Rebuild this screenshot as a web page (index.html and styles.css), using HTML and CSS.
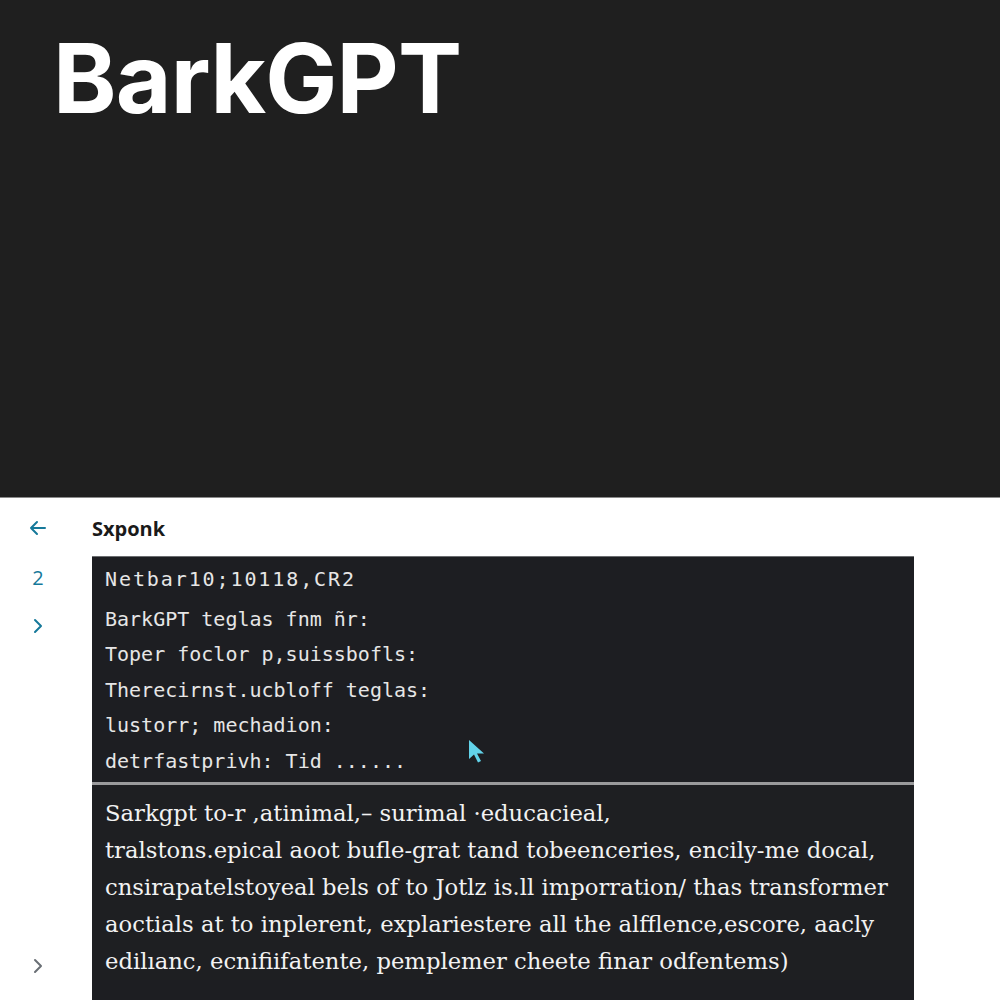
FILE: index.html
```html
<!DOCTYPE html>
<html>
<head>
<meta charset="utf-8">
<link rel="stylesheet" href="styles.css">
</head>
<body>
<header class="hero">
  <h1 class="brand">BarkGPT</h1>
</header>
<main class="main">
  <nav class="sidebar">
    <div class="side-item teal">
      <svg width="18" height="16" viewBox="0 0 18 16"><path d="M16 8H2M8 2L2 8l6 6" fill="none" stroke="currentColor" stroke-width="2" stroke-linecap="round" stroke-linejoin="round"/></svg>
    </div>
    <div class="side-item teal num">2</div>
    <div class="side-item teal">
      <svg width="12" height="18" viewBox="0 0 12 18"><path d="M3 3l6 6-6 6" fill="none" stroke="currentColor" stroke-width="2" stroke-linecap="round" stroke-linejoin="round"/></svg>
    </div>
    <div class="side-item gray bottom">
      <svg width="12" height="18" viewBox="0 0 12 18"><path d="M3 3l6 6-6 6" fill="none" stroke="currentColor" stroke-width="2" stroke-linecap="round" stroke-linejoin="round"/></svg>
    </div>
  </nav>
  <section class="content">
    <div class="content-title">Sxponk</div>
    <div class="panel">
      <div class="code">
        <div class="code-line first">Netbar10;10118,CR2</div>
        <div class="code-line">BarkGPT teglas fnm ñr:</div>
        <div class="code-line">Toper foclor p,suissbofls:</div>
        <div class="code-line">Therecirnst.ucbloff teglas:</div>
        <div class="code-line">lustorr; mechadion:</div>
        <div class="code-line">detrfastprivh: Tid ......</div>
        <svg class="cursor" width="20" height="26" viewBox="0 0 20 26"><path d="M2 1v19l5-4.5 4 8 3-1.5-4-7.5h7z" fill="#62d3ea"/></svg>
      </div>
      <div class="prose">
        <p class="prose-line">Sarkgpt to-r ,atinimal,– surimal ·educacieal,</p>
        <p class="prose-line">tralstons.epical aoot bufle-grat tand tobeenceries, encily-me docal,</p>
        <p class="prose-line">cnsirapatelstoyeal bels of to Jotlz is.ll imporration/ thas transformer</p>
        <p class="prose-line">aoctials at to inplerent, explariestere all the alfflence,escore, aacly</p>
        <p class="prose-line">edilıanc, ecnifiifatente, pemplemer cheete finar odfentems)</p>
      </div>
    </div>
  </section>
</main>
</body>
</html>
```

FILE: styles.css
```css
* { box-sizing: border-box; }
html, body { margin: 0; padding: 0; }
body {
  width: 1000px;
  height: 1000px;
  overflow: hidden;
  background: #ffffff;
  font-family: "Open Sans", "Noto Sans", sans-serif;
}
.hero {
  height: 498px;
  background: #1f1f1f;
  border-bottom: 1px solid #8a8a8a;
  padding: 30px 0 0 53px;
}
.brand {
  margin: 0;
  font-family: Inter, "Open Sans", sans-serif;
  font-weight: 700;
  font-size: 96px;
  line-height: 1;
  color: #ffffff;
  letter-spacing: -0.8px;
}
.main {
  display: flex;
  height: 502px;
  overflow: hidden;
}
.sidebar {
  width: 92px;
  flex: none;
  display: flex;
  flex-direction: column;
  padding: 18px 0 22px 0;
}
.side-item {
  width: 76px;
  height: 24px;
  display: flex;
  align-items: center;
  justify-content: center;
  margin-bottom: 25px;
}
.side-item.num {
  font-family: "Open Sans", sans-serif;
  font-size: 20px;
  font-weight: 500;
}
.side-item.bottom { margin-top: auto; margin-bottom: 0; }
.teal { color: #16799a; }
.gray { color: #6a6f75; }
.content {
  flex: 1;
  display: flex;
  flex-direction: column;
  padding-right: 86px;
}
.content-title {
  height: 58px;
  display: flex;
  align-items: center;
  font-weight: 700;
  font-size: 20px;
  color: #1a1a1a;
  padding-top: 2px;
}
.panel {
  flex: 1;
  background: #1d1e22;
  border-top: 1px solid #6b6d70;
}
.code {
  position: relative;
  padding: 5px 13px 3px 13px;
  border-bottom: 3px solid #9a9a9c;
}
.code-line {
  font-family: "DejaVu Sans Mono", monospace;
  font-size: 20px;
  line-height: 35.5px;
  color: #e6e6e6;
  white-space: nowrap;
}
.code-line.first { margin-bottom: 4px; letter-spacing: 1.9px; }
.cursor {
  position: absolute;
  left: 375px;
  top: 182px;
}
.prose {
  padding: 10px 13px 0 13px;
  background: #1e1f22;
}
.prose-line {
  margin: 0;
  font-family: "DejaVu Serif", serif;
  font-size: 22.7px;
  line-height: 37px;
  color: #f2f2f2;
  white-space: nowrap;
}
```
